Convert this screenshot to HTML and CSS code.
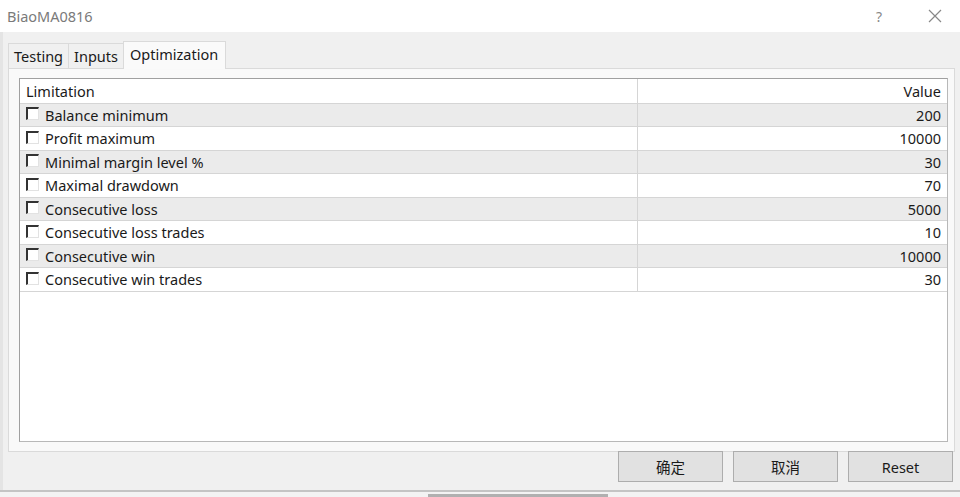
FILE: index.html
```html
<!doctype html>
<html>

<head>
  <title>BiaoMA0816</title>
  <link rel="stylesheet" href="styles.css">
</head>

<body>
  <div class="window">
    <div class="titlebar">
      <span class="title">BiaoMA0816</span>
      <span class="help">?</span>
      <svg class="close" width="14" height="14" viewBox="0 0 14 14">
        <path d="M1 1L13 13M13 1L1 13" stroke="#888" stroke-width="1.2" fill="none" />
      </svg>
    </div>
    <div class="content">
      <div class="tabs">
        <div class="tab">Testing</div>
        <div class="tab">Inputs</div>
        <div class="tab active">Optimization</div>
      </div>
      <div class="panel">
        <div class="grid">
          <div class="row head">
            <div class="cell name">Limitation</div>
            <div class="cell value">Value</div>
          </div>
          <div class="row odd">
            <div class="cell name"><span class="check"></span>Balance minimum</div>
            <div class="cell value">200</div>
          </div>
          <div class="row">
            <div class="cell name"><span class="check"></span>Profit maximum</div>
            <div class="cell value">10000</div>
          </div>
          <div class="row odd">
            <div class="cell name"><span class="check"></span>Minimal margin level %</div>
            <div class="cell value">30</div>
          </div>
          <div class="row">
            <div class="cell name"><span class="check"></span>Maximal drawdown</div>
            <div class="cell value">70</div>
          </div>
          <div class="row odd">
            <div class="cell name"><span class="check"></span>Consecutive loss</div>
            <div class="cell value">5000</div>
          </div>
          <div class="row">
            <div class="cell name"><span class="check"></span>Consecutive loss trades</div>
            <div class="cell value">10</div>
          </div>
          <div class="row odd">
            <div class="cell name"><span class="check"></span>Consecutive win</div>
            <div class="cell value">10000</div>
          </div>
          <div class="row">
            <div class="cell name"><span class="check"></span>Consecutive win trades</div>
            <div class="cell value">30</div>
          </div>
        </div>
      </div>
      <div class="buttons">
        <button>确定</button>
        <button>取消</button>
        <button>Reset</button>
      </div>
    </div>
    <div class="bottom">
      <div class="scroll"></div>
    </div>
  </div>
</body>

</html>
```

FILE: styles.css
```css
*,
*::before,
*::after {
  box-sizing: border-box;
}

html {
  font-family: "Noto Sans", "Noto Sans CJK SC", sans-serif;
  font-size: 14.5px;
  color: #1a1a1a;
}

body {
  margin: 0;
  background: #f0f0f0;
}

.window {
  width: 960px;
  height: 497px;
  display: flex;
  flex-direction: column;
  background: #f0f0f0;
  border-left: 3px solid #e4e4e4;
}

.titlebar {
  height: 32px;
  background: #fff;
  display: flex;
  align-items: center;
  padding-left: 4px;
  margin-left: -3px;
}

.title {
  flex: 1;
  color: #7a7a7a;
  font-size: 14.5px;
  padding-left: 3px;
}

.help {
  color: #888;
  font-size: 14px;
  margin-right: 46px;
}

.close {
  margin-right: 18px;
}

.content {
  flex: 1;
  padding: 9px 5px 0 5px;
  display: flex;
  flex-direction: column;
}

.tabs {
  display: flex;
  height: 27px;
  align-items: flex-end;
}

.tab {
  height: 25px;
  line-height: 24px;
  padding: 0 5px;
  border: 1px solid #dadada;
  border-bottom: none;
  margin-right: -1px;
  background: #f0f0f0;
}

.tab.active {
  height: 28px;
  line-height: 25px;
  background: #fafafa;
  margin-bottom: -1px;
  position: relative;
  padding: 0 7px 0 6px;
}

.panel {
  height: 384px;
  border: 1px solid #dadada;
  background: #f9f9f9;
  padding: 9px 6px 9px 10px;
}

.grid {
  height: 100%;
  background: #fff;
  border: 1px solid #a0a0a0;
  border-right-color: #b8b8b8;
  border-bottom-color: #b8b8b8;
}

.row {
  display: flex;
  height: 23.5px;
  border-bottom: 1px solid #d5d5d5;
}

.row.head {
  height: 24.5px;
}

.row.odd {
  background: #ebebeb;
}

.cell {
  display: flex;
  align-items: center;
  white-space: nowrap;
}

.cell.name {
  width: 618px;
  padding-left: 6px;
  border-right: 1px solid #d5d5d5;
}

.cell.value {
  flex: 1;
  justify-content: flex-end;
  padding-right: 6px;
}

.check {
  width: 13px;
  height: 13px;
  margin-right: 6px;
  margin-top: -2px;
  border-top: 2px solid #333;
  border-left: 2px solid #333;
  border-right: 1px solid #e2e2e2;
  border-bottom: 1px solid #e2e2e2;
  background: #fff;
}

.buttons {
  display: flex;
  justify-content: flex-end;
  gap: 10px;
  margin-top: -1px;
  padding-right: 2px;
}

button {
  width: 105px;
  height: 31px;
  font-family: "Noto Sans", "Noto Sans CJK SC", sans-serif;
  font-size: 14.5px;
  color: #1a1a1a;
  background: #e1e1e1;
  border: 1px solid #adadad;
}

.bottom {
  height: 7px;
  border-top: 2px solid #c4c4c4;
  background: #f3f3f3;
  margin-left: -3px;
  position: relative;
}

.scroll {
  position: absolute;
  left: 428px;
  top: 2px;
  width: 180px;
  height: 3px;
  background: #b0b0b0;
}
```
